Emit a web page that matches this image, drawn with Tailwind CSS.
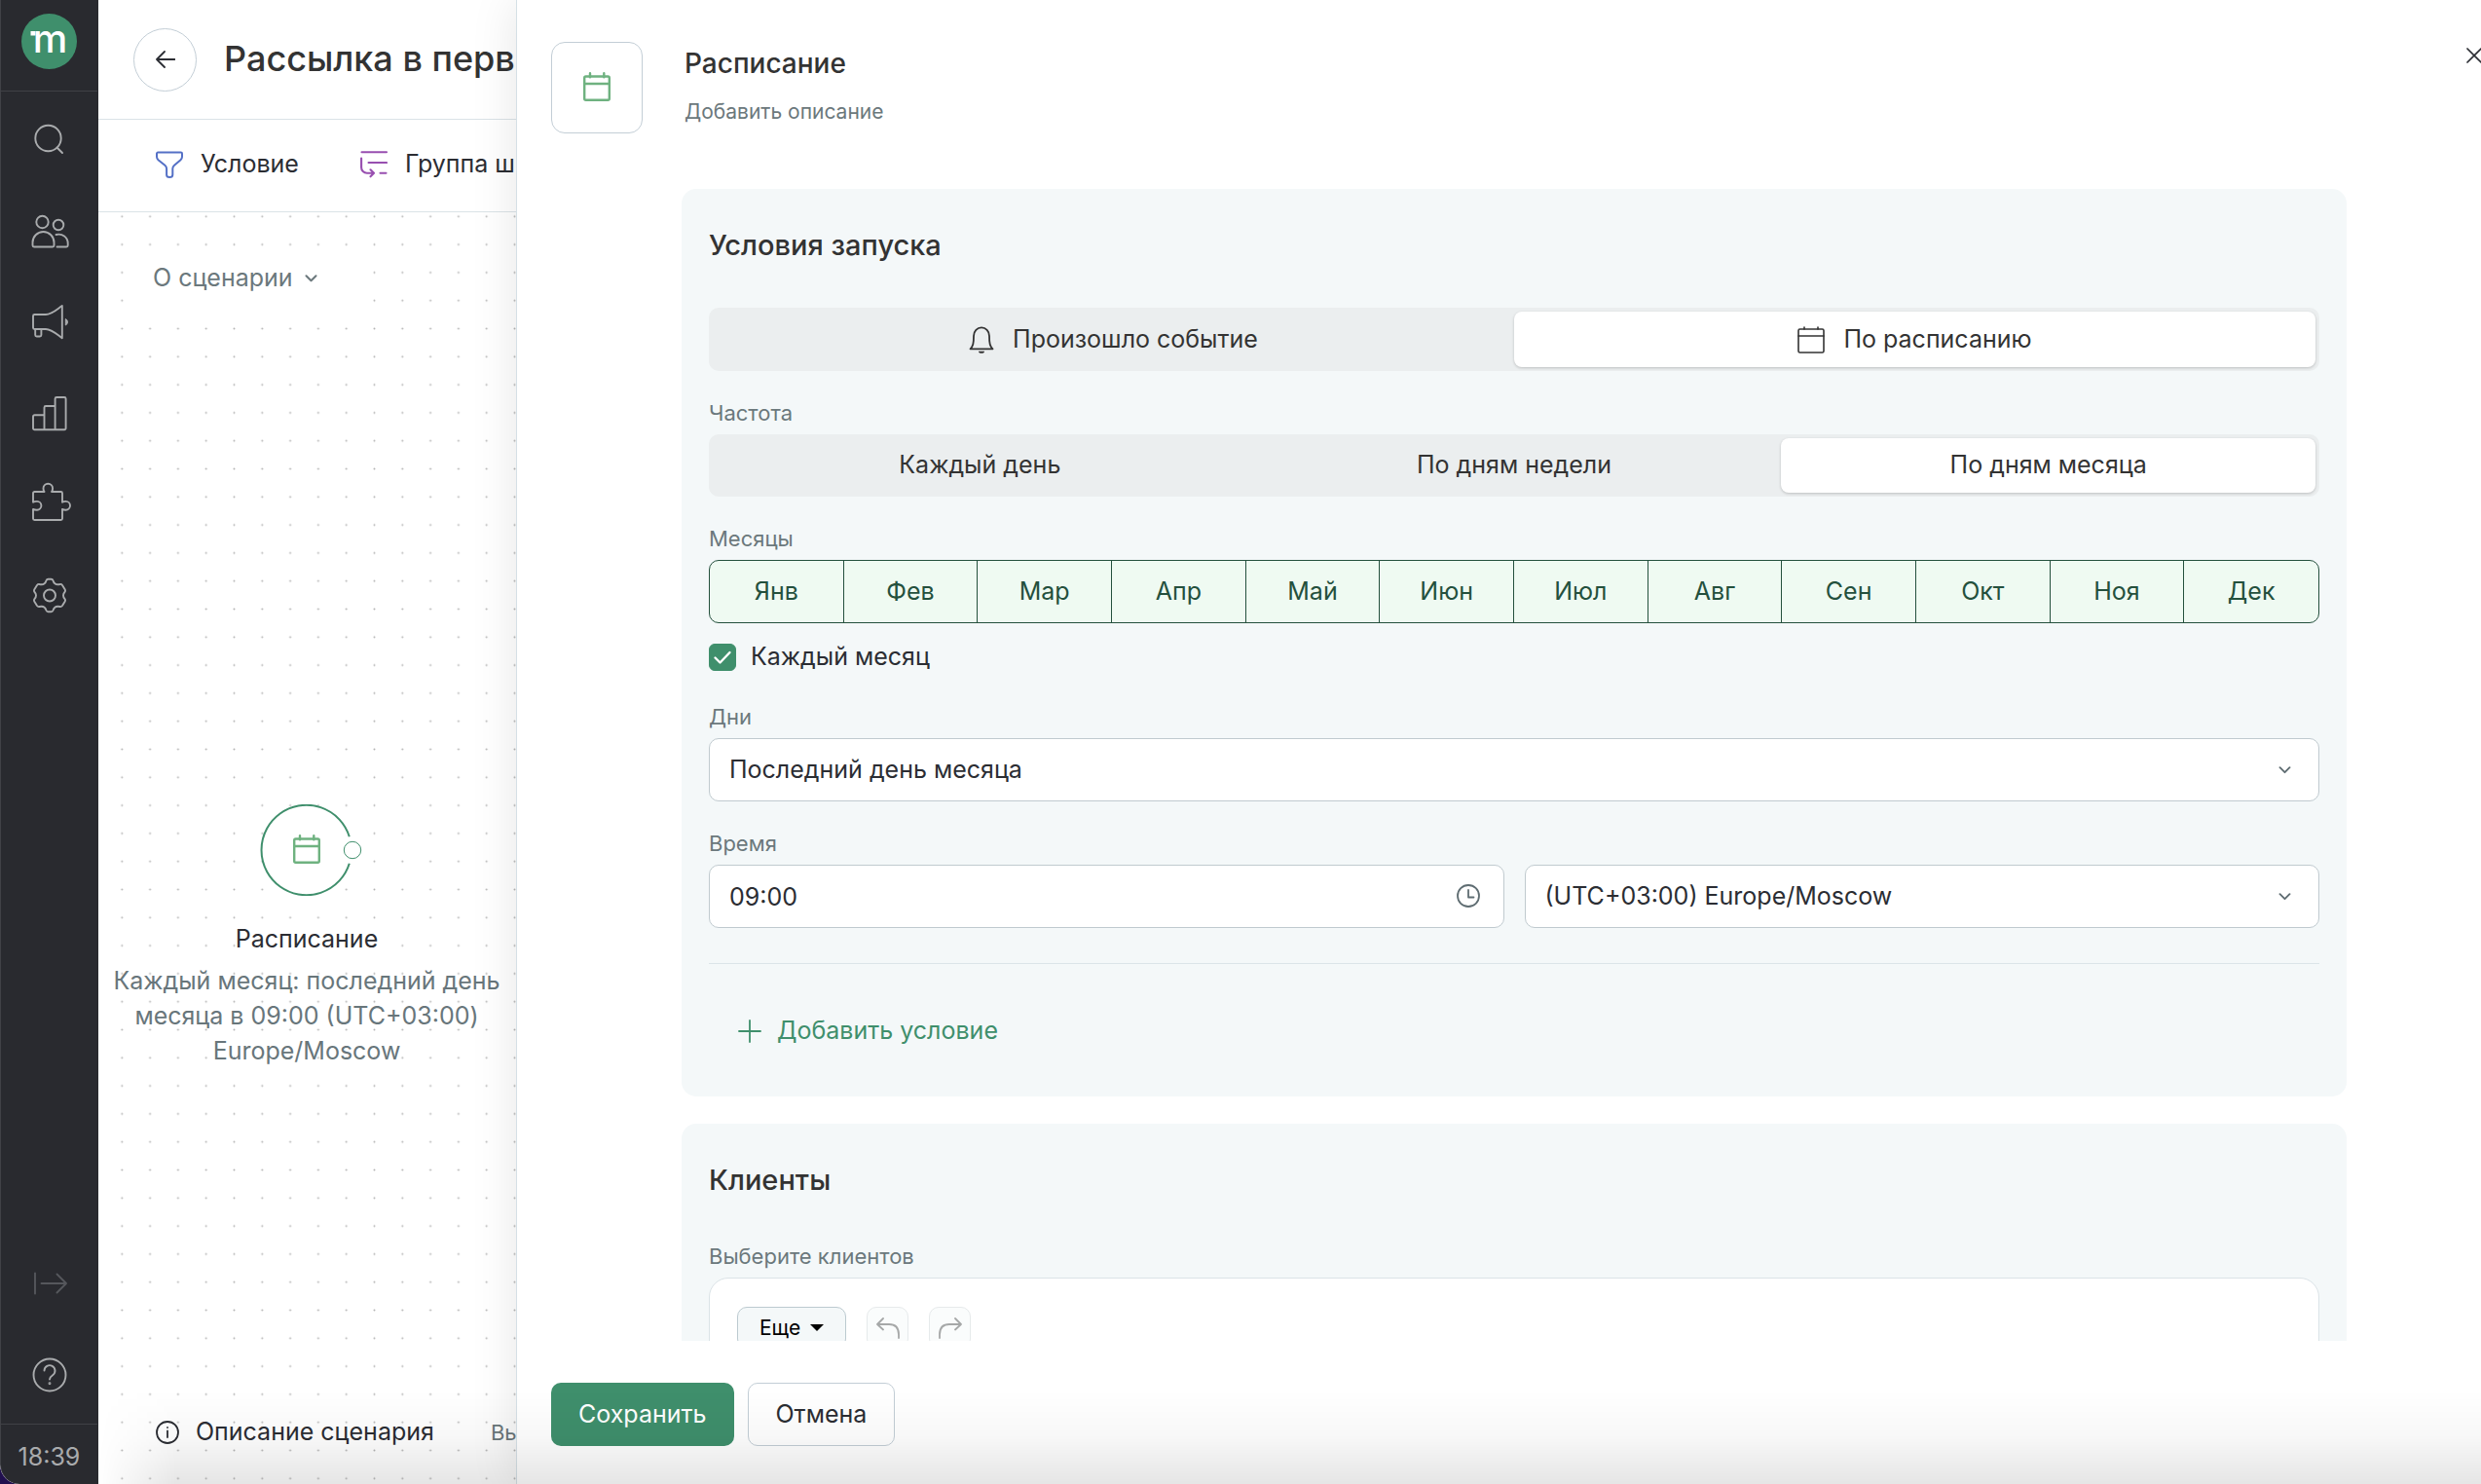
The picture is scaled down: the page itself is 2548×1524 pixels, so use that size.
<!DOCTYPE html>
<html lang="ru">
<head>
    <meta charset="UTF-8">
    <meta name="viewport" content="width=device-width, initial-scale=1.0">
    <title>Расписание</title>
    <script src="https://cdn.jsdelivr.net/npm/@tailwindcss/browser@4"></script>
</head>
<body class="bg-[#21104f] font-['Inter',sans-serif] text-[25px] text-[#2b2d33]">

    <div class="relative flex h-screen overflow-hidden rounded-bl-[20px] bg-white">
        <!-- Sidebar -->
        <aside class="flex w-[101px] shrink-0 flex-col rounded-bl-[20px] border-l border-[#404146] bg-[#292a2f] pr-px text-[#a9abad]">
            <a href="#" aria-label="Главная" class="flex h-[94px] justify-center border-b border-[#404146] pt-[14px]">
                <svg class="size-[57px]" viewBox="0 0 57 57">
                    <circle cx="28.5" cy="28.5" r="28.5" fill="#3f8f6c"/>
                    <rect x="9.5" y="18" width="5" height="4.5" fill="#fff"/>
                    <text x="29.5" y="39.5" text-anchor="middle" font-size="40" font-weight="500" fill="#fff">m</text>
                </svg>
            </a>
            <nav class="flex flex-col pt-[2px]">
                <a href="#" aria-label="Поиск" class="flex h-[94px] items-center justify-center">
                    <svg class="size-10" viewBox="0 0 40 40" fill="none" stroke="currentColor" stroke-width="1.9" stroke-linecap="round"><circle cx="18.5" cy="19" r="13.2"/><path d="M27.5 28.5 33 34"/></svg>
                </a>
                <a href="#" aria-label="Клиенты" class="flex h-[94px] items-center justify-center">
                    <svg class="size-10" viewBox="0 0 40 40" fill="none" stroke="currentColor" stroke-width="1.9" stroke-linecap="round"><circle cx="12.5" cy="11" r="6.2"/><circle cx="29" cy="14" r="5.3"/><path d="M4 36.5h19a1.5 1.5 0 0 0 1.5-1.5v-3a11 11 0 0 0-22 0v3a1.5 1.5 0 0 0 1.5 1.5z"/><path d="M26.5 24C33 22.3 38.7 26.5 38.7 33v2a1.5 1.5 0 0 1-1.5 1.5H27.5"/></svg>
                </a>
                <a href="#" aria-label="Кампании" class="flex h-[94px] items-center justify-center">
                    <svg class="size-10" viewBox="0 0 40 40" fill="none" stroke="currentColor" stroke-width="1.9" stroke-linejoin="round"><path d="M16 12H4.500A1.5 1.5 0 0 0 3 13.5v12A1.5 1.5 0 0 0 4.500 27H16c6 0 11 5 16.800 9.300V3C27 7 22 12 16 12z"/><path d="M5.200 27v6a1.5 1.5 0 0 0 1.5 1.5h3.200a1.5 1.5 0 0 0 1.5-1.5v-6"/><path d="M36.300 16.500a3.500 3.500 0 0 1 0 6.500z" fill="currentColor" stroke-width="1"/></svg>
                </a>
                <a href="#" aria-label="Отчёты" class="flex h-[94px] items-center justify-center">
                    <svg class="size-10" viewBox="0 0 40 40" fill="none" stroke="currentColor" stroke-width="1.9" stroke-linejoin="round"><path d="M25.600 36.300V4.500A1.5 1.5 0 0 1 27.100 3h8A1.5 1.5 0 0 1 36.600 4.500v30.300a1.5 1.5 0 0 1-1.5 1.5H4.500A1.5 1.5 0 0 1 3 34.800v-12a1.5 1.5 0 0 1 1.5-1.5h10"/><path d="M14.500 36.300V13.500A1.5 1.5 0 0 1 16 12h9.600"/></svg>
                </a>
                <a href="#" aria-label="Интеграции" class="flex h-[94px] items-center justify-center">
                    <svg class="size-10 overflow-visible" viewBox="0 0 40 40" fill="none" stroke="currentColor" stroke-width="1.9" stroke-linejoin="round"><path d="M4.500 6H14.500C13.600 5 13.500 3.500 13.500 2.500a4.800 4.800 0 0 1 9.600 0C23.100 3.500 23 5 22.100 6H31.500A1.5 1.5 0 0 1 33 7.500V16.700C34 16 35.500 15.900 36.600 15.900a4.400 4.400 0 0 1 0 8.800C35.500 24.700 34 24.600 33 23.900V33.500A1.5 1.5 0 0 1 31.500 35h-27A1.5 1.5 0 0 1 3 33.500V23.900C4 24.600 5.500 24.700 7 24.700a4.400 4.400 0 0 0 0-8.800C5.500 15.900 4 16 3 16.700V7.500A1.5 1.5 0 0 1 4.500 6z"/></svg>
                </a>
                <a href="#" aria-label="Настройки" class="flex h-[94px] items-center justify-center">
                    <svg class="size-10" viewBox="0 0 40 40" fill="none" stroke="currentColor" stroke-width="1.9" stroke-linejoin="round"><circle cx="20" cy="18.5" r="6"/><path d="M16.500 3.200Q17 1.700 18.500 1.700h3Q23 1.700 23.500 3.200C24.500 6.500 27 7.800 30.500 7Q32 6.600 33 8L35.800 12.500Q36.500 14 35.500 15C33.500 17 33.500 20 35.500 22Q36.500 23 35.800 24.500L33 29Q32 30.400 30.500 30C27 29.200 24.500 30.500 23.500 33.800Q23 35.300 21.500 35.300h-3Q17 35.300 16.500 33.800C15.500 30.500 13 29.200 9.500 30Q8 30.400 7 29L4.200 24.500Q3.500 23 4.500 22C6.500 20 6.500 17 4.500 15Q3.500 14 4.200 12.500L7 8Q8 6.600 9.500 7C13 7.800 15.500 6.500 16.500 3.200z"/></svg>
                </a>
            </nav>
            <div class="mt-auto flex flex-col">
                <button aria-label="Развернуть меню" class="flex h-[94px] items-center justify-center text-[#55575c]">
                    <svg class="size-10" viewBox="0 0 40 40" fill="none" stroke="currentColor" stroke-width="1.9" stroke-linecap="round" stroke-linejoin="round"><path d="M5 9.500v21M11.500 20H37M27.500 10.500 37 20l-9.500 9.500"/></svg>
                </button>
                <button aria-label="Помощь" class="flex h-[94px] items-center justify-center">
                    <svg class="size-10" viewBox="0 0 40 40" fill="none" stroke="currentColor" stroke-width="1.9" stroke-linecap="round"><circle cx="20" cy="20" r="16.5"/><path d="M14.500 15.500a5.500 5.500 0 1 1 8.600 4.700c-2 1.400-3.100 2.300-3.100 4.300"/><circle cx="20" cy="28.8" r=".5"/></svg>
                </button>
                <div class="mt-[3px] h-[62px] border-t border-[#404146] pt-[18px] text-center leading-[30px]">18:39</div>
            </div>
        </aside>

        <!-- Scenario editor -->
        <main class="flex w-[429px] shrink-0 flex-col overflow-hidden whitespace-nowrap">
            <header class="flex h-[123px] shrink-0 items-center gap-[28px] border-b border-[#dbe3e7] pl-[36px]">
                <button aria-label="Назад" class="flex size-[65px] shrink-0 items-center justify-center rounded-full border border-[#c3ced6]">
                    <svg class="size-5" viewBox="0 0 20 20" fill="none" stroke="currentColor" stroke-width="1.8" stroke-linecap="round" stroke-linejoin="round"><path d="M19.500 10H1M9 2 1 10l8 8"/></svg>
                </button>
                <h1 class="pb-[2px] text-[36px] font-medium text-[#333]">Рассылка в перв</h1>
            </header>
            <div class="flex h-[95px] shrink-0 items-center gap-[63px] border-b border-[#dbe3e7] pb-[2px] pl-[59px]">
                <button class="flex items-center gap-[18px]">
                    <svg class="size-7" viewBox="0 0 28 28" fill="none" stroke="#5470c6" stroke-width="2" stroke-linejoin="round"><path d="M2.200 1.500h23.600a1.200 1.200 0 0 1 1.200 1.200V6c0 1.500-.5 2.300-1.500 3.200l-6.500 5.600c-1.200 1-1.700 2-1.700 3.500V24.500c0 1.600-1.400 2.500-3.100 2.500s-3.100-.9-3.100-2.500v-6.200c0-1.500-.5-2.500-1.700-3.500L2.500 9.200C1.500 8.300 1 7.500 1 6V2.700a1.200 1.200 0 0 1 1.200-1.200z"/></svg>
                    Условие
                </button>
                <button class="flex items-center gap-[18px]">
                    <svg class="size-7" viewBox="0 0 28 28" fill="none" stroke="#984fb0" stroke-width="2.1" stroke-linecap="round" stroke-linejoin="round"><path d="M1.500 1.200H27M8.500 12H27M1.100 7.500V17a5.800 5.800 0 0 0 5.800 5.800H13.500M10.500 19.300 14 22.800l-3.500 3.500M20.500 22.800H26.500"/></svg>
                    Группа ш
                </button>
            </div>

            <!-- Canvas -->
            <div class="relative flex-1">
                <svg class="absolute inset-0 size-full" aria-hidden="true">
                    <defs>
                        <pattern id="dots" x="9.9" y="-10.1" width="28.8" height="28.8" patternUnits="userSpaceOnUse"><circle cx="14.4" cy="14.4" r="1" fill="#b4b4b4"/></pattern>
                    </defs>
                    <rect width="100%" height="100%" fill="url(#dots)"/>
                </svg>
                <button class="absolute top-[36px] left-[36px] flex h-[64px] items-center gap-[12px] bg-white pr-[40px] pl-[20px] text-[#6b787c]">
                    О сценарии
                    <svg class="h-2 w-[13px]" viewBox="0 0 13 8" fill="none" stroke="currentColor" stroke-width="2" stroke-linecap="round" stroke-linejoin="round"><path d="m1.500 1.200 5 5 5-5"/></svg>
                </button>
                <div class="absolute top-[608px] left-[9px] flex w-[410px] flex-col items-center text-center">
                    <svg class="h-[94px] w-[114px]" viewBox="0 0 114 94" fill="none">
                        <path d="M100.800 33.200A46.200 46.200 0 1 0 100.800 60.800" fill="#fff" stroke="#3f8f6c" stroke-width="2"/>
                        <circle cx="104" cy="47" r="8.7" fill="#fff" stroke="#3f8f6c" stroke-width="1"/>
                        <g transform="translate(43 31)" stroke="#6fb280" stroke-width="2.4" stroke-linecap="round"><rect x="1.2" y="4.5" width="25.6" height="24.3" rx="1.5"/><path d="M1.200 12h25.600M7 1.200v4M21.300 1.200v4"/></g>
                    </svg>
                    <div class="mt-[26px] leading-[36px]">Расписание</div>
                    <div class="mt-[7px] leading-[36px] whitespace-normal text-[#68767b]">Каждый месяц: последний день месяца в 09:00 (UTC+03:00) Europe/Moscow</div>
                </div>
                <div class="absolute bottom-[35px] left-[59px] flex h-[36px] items-center">
                    <button class="flex items-center gap-[17px]">
                        <svg class="size-6" viewBox="0 0 24 24" fill="none" stroke="currentColor" stroke-width="1.8" stroke-linecap="round"><circle cx="12" cy="12" r="11"/><path d="M12 10.500v6.500M12 7v.100"/></svg>
                        Описание сценария
                    </button>
                    <span class="ml-[58px] text-[22px] text-[#6b787c]">Вы</span>
                </div>
            </div>
        </main>

        <!-- Step settings drawer -->
        <section class="relative flex min-w-0 flex-1 flex-col border-l border-[#d5e0e6] bg-white shadow-[0_0_45px_rgba(0,0,0,0.1)]">
            <div class="flex min-h-0 flex-1 flex-col overflow-hidden pr-[138px] pl-[35px]">
                <div class="relative flex shrink-0 gap-[43px] pt-[43px]">
                    <div class="flex size-[94px] items-center justify-center rounded-[14px] border border-[#c3ced6] pb-[2px]">
                        <svg class="h-[30px] w-7" viewBox="0 0 28 30" fill="none" stroke="#6fb280" stroke-width="2.4" stroke-linecap="round"><rect x="1.2" y="4.5" width="25.6" height="24.3" rx="1.5"/><path d="M1.200 12h25.600M7 1.200v4M21.300 1.200v4"/></svg>
                    </div>
                    <div class="pt-[4px]">
                        <h2 class="text-[28px] leading-[36px] font-medium text-[#333]">Расписание</h2>
                        <button class="mt-[18px] block text-[21px] leading-[28px] text-[#6b787c]">Добавить описание</button>
                    </div>
                    <button aria-label="Закрыть" class="absolute top-[43px] -right-[145px] flex size-7 items-center justify-center">
                        <svg class="size-4" viewBox="0 0 16 16" fill="none" stroke="currentColor" stroke-width="1.7" stroke-linecap="round"><path d="m1 1 14 14M15 1 1 15"/></svg>
                    </button>
                </div>

                <div class="mt-[57px] ml-[134px] flex flex-col gap-7">
                    <!-- Launch conditions -->
                    <div class="rounded-[15px] bg-[#f4f8f9] px-7 pt-10 pb-[35px]">
                        <h3 class="text-[29px] leading-[36px] font-medium text-[#333]">Условия запуска</h3>

                        <div class="mt-[46px] grid h-[65px] grid-cols-2 rounded-[10px] bg-[#ebeeef] p-1 text-[#333]">
                            <button class="flex items-center justify-center gap-[19px] rounded-lg">
                                <svg class="h-7 w-[26px]" viewBox="0 0 26 28" fill="none" stroke="currentColor" stroke-width="1.8" stroke-linejoin="round"><path d="M1.500 23.300c2.800-2.800 3.500-5.500 3.500-13.300a8 8.600 0 0 1 16 0c0 7.800.7 10.500 3.500 13.300z"/><path d="M10 25.800h6a3 2 0 0 1-6 0z" fill="currentColor" stroke="none"/></svg>
                                Произошло событие
                            </button>
                            <button class="flex items-center justify-center gap-[19px] rounded-lg bg-white shadow-[0_1px_3px_rgba(0,0,0,0.2)]">
                                <svg class="size-7" viewBox="0 0 28 28" fill="none" stroke="currentColor" stroke-width="1.6" stroke-linecap="round"><rect x="1" y="3" width="26" height="24" rx="1.5"/><path d="M1 10h26M7 1v2M21 1v2"/></svg>
                                По расписанию
                            </button>
                        </div>

                        <div class="mt-[29px] mb-2 text-[22px] leading-[28px] text-[#6b787c]">Частота</div>
                        <div class="grid h-[64px] grid-cols-3 rounded-[10px] bg-[#ebeeef] p-1 text-[#333]">
                            <button class="rounded-lg">Каждый день</button>
                            <button class="rounded-lg">По дням недели</button>
                            <button class="rounded-lg bg-white shadow-[0_1px_3px_rgba(0,0,0,0.2)]">По дням месяца</button>
                        </div>

                        <div class="mt-[29px] mb-2 text-[22px] leading-[28px] text-[#6b787c]">Месяцы</div>
                        <div class="grid h-[65px] grid-cols-12 divide-x divide-[#24503d] overflow-hidden rounded-[10px] border border-[#24503d] bg-[#effaf2] text-[#24503d]">
                            <button>Янв</button>
                            <button>Фев</button>
                            <button>Мар</button>
                            <button>Апр</button>
                            <button>Май</button>
                            <button>Июн</button>
                            <button>Июл</button>
                            <button>Авг</button>
                            <button>Сен</button>
                            <button>Окт</button>
                            <button>Ноя</button>
                            <button>Дек</button>
                        </div>

                        <label class="relative mt-[21px] flex h-7 items-center gap-[15px]">
                            <input type="checkbox" checked class="size-7 appearance-none rounded-md border border-[#c3ced6] checked:border-[#3f8f6c] checked:bg-[#3f8f6c]">
                            <svg class="pointer-events-none absolute top-0 left-0 size-7" viewBox="0 0 28 28" fill="none" stroke="#fff" stroke-width="2.4" stroke-linecap="round" stroke-linejoin="round"><path d="m6.500 14.500 5 5L21.500 9"/></svg>
                            Каждый месяц
                        </label>

                        <label for="days" class="mt-[33px] mb-2 block text-[22px] leading-[28px] text-[#6b787c]">Дни</label>
                        <div class="relative">
                            <select id="days" class="h-[65px] w-full appearance-none rounded-[10px] border border-[#c0cacf] bg-white px-5">
                                <option>Последний день месяца</option>
                            </select>
                            <svg class="pointer-events-none absolute top-[29px] right-[29px] h-2 w-[13px] text-[#5f6d72]" viewBox="0 0 13 8" fill="none" stroke="currentColor" stroke-width="1.9" stroke-linecap="round" stroke-linejoin="round"><path d="m1.500 1.200 5 5 5-5"/></svg>
                        </div>

                        <label for="time" class="mt-[29px] mb-2 block text-[22px] leading-[28px] text-[#6b787c]">Время</label>
                        <div class="grid grid-cols-2 gap-[21px]">
                            <div class="relative">
                                <input id="time" type="text" value="09:00" class="h-[65px] w-full rounded-[10px] border border-[#c0cacf] bg-white px-5">
                                <svg class="pointer-events-none absolute top-5 right-[25px] size-6 text-[#5f6d72]" viewBox="0 0 24 24" fill="none" stroke="currentColor" stroke-width="1.8" stroke-linecap="round" stroke-linejoin="round"><circle cx="12" cy="12" r="11"/><path d="M12 6v7.500h5.500"/></svg>
                            </div>
                            <div class="relative">
                                <select aria-label="Часовой пояс" class="h-[65px] w-full appearance-none rounded-[10px] border border-[#c0cacf] bg-white px-5">
                                    <option>(UTC+03:00) Europe/Moscow</option>
                                </select>
                                <svg class="pointer-events-none absolute top-[29px] right-[29px] h-2 w-[13px] text-[#5f6d72]" viewBox="0 0 13 8" fill="none" stroke="currentColor" stroke-width="1.9" stroke-linecap="round" stroke-linejoin="round"><path d="m1.500 1.200 5 5 5-5"/></svg>
                            </div>
                        </div>

                        <hr class="mt-9 border-[#dbe4e9]">
                        <button class="mt-9 flex h-[65px] items-center gap-4 px-[30px] text-[#3f8f6c]">
                            <svg class="size-6" viewBox="0 0 24 24" fill="none" stroke="currentColor" stroke-width="1.8" stroke-linecap="round"><path d="M12 1v22M1 12h22"/></svg>
                            Добавить условие
                        </button>
                    </div>

                    <!-- Clients -->
                    <div class="rounded-[15px] bg-[#f4f8f9] px-7 pt-10 pb-[35px]">
                        <h3 class="text-[29px] leading-[36px] font-medium text-[#333]">Клиенты</h3>
                        <div class="mt-[46px] mb-2 text-[22px] leading-[28px] text-[#6b787c]">Выберите клиентов</div>
                        <div class="flex gap-[21px] rounded-[20px] border border-[#dbe3e7] bg-white px-7 pt-[29px] pb-40">
                            <button class="flex h-[43px] items-center gap-[10px] rounded-[10px] border border-[#bccad0] bg-[#f4f8f9] px-[22px] text-[21px] text-black">
                                Еще
                                <svg class="h-[7px] w-[14px]" viewBox="0 0 14 7"><path d="M0 0h14L7 7z"/></svg>
                            </button>
                            <button aria-label="Отменить" class="flex size-[43px] items-center justify-center rounded-[10px] border border-[#e6eaeb] bg-[#fafcfc] text-[#a6a8a8]">
                                <svg class="size-6" viewBox="0 0 24 24" fill="none" stroke="currentColor" stroke-width="1.8" stroke-linecap="round" stroke-linejoin="round"><path d="M23 22v-3.500C23 11.500 19 8 13 8H1M7 2 1 8l6 5.500"/></svg>
                            </button>
                            <button aria-label="Повторить" class="flex size-[43px] items-center justify-center rounded-[10px] border border-[#e6eaeb] bg-[#fafcfc] text-[#a6a8a8]">
                                <svg class="size-6" viewBox="0 0 24 24" fill="none" stroke="currentColor" stroke-width="1.8" stroke-linecap="round" stroke-linejoin="round"><path d="M1 22v-3.500C1 11.500 5 8 11 8h12M17 2l6 6-6 5.500"/></svg>
                            </button>
                        </div>
                    </div>
                </div>
            </div>

            <footer class="flex shrink-0 gap-[14px] bg-white pt-[43px] pb-[39px] pl-[35px]">
                <button class="h-[65px] rounded-[10px] bg-[#3f8f6c] px-7 text-white">Сохранить</button>
                <button class="h-[65px] rounded-[10px] border border-[#c3ced6] bg-white px-7">Отмена</button>
            </footer>
        </section>

        <!-- Bottom fade -->
        <div class="pointer-events-none absolute right-0 bottom-0 left-[101px] h-[96px] bg-linear-to-t from-black/10 via-black/3 to-transparent [mask-image:linear-gradient(to_right,transparent,black_80px)]"></div>
    </div>

</body>
</html>
